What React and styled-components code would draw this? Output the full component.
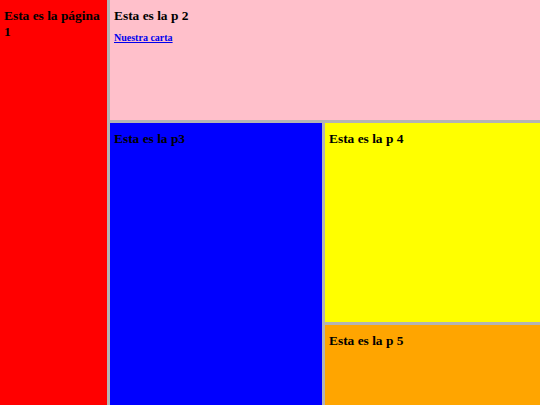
import React from 'react';
import styled, { createGlobalStyle } from 'styled-components';

const Global = createGlobalStyle`
  html, body {
    margin: 0;
    padding: 0;
    height: 100%;
  }
  body {
    font-family: "Liberation Serif", "Times New Roman", serif;
    background: #b8b8b8;
  }
  #root {
    height: 100%;
  }
`;

const Frameset = styled.div`
  display: grid;
  grid-template-columns: ${p => p.cols || 'none'};
  grid-template-rows: ${p => p.rows || 'none'};
  gap: 3px;
  height: ${p => (p.root ? '405px' : '100%')};
  width: 100%;
  min-height: 0;
  background: #b4b4b4;
  overflow: hidden;
`;

const Frame = styled.div`
  background: ${p => p.bg};
  padding: 0 4px;
  overflow: hidden;
  min-height: 0;
`;

const Title = styled.h3`
  margin: 8px 0 0;
  font-size: 13.4px;
  line-height: 16px;
  font-weight: bold;
  color: #000;
`;

const Sub = styled.h5`
  margin: 8px 0 0;
  font-size: 10px;
  font-weight: bold;
`;

const MenuLink = styled.a`
  color: #0000ee;
  text-decoration: underline;
`;

export default function App() {
  return (
    <>
      <Global />
      <Frameset root cols="107px 1fr">
        <Frame bg="#ff0000">
          <Title>Esta es la página 1</Title>
        </Frame>
        <Frameset rows="120px 1fr">
          <Frame bg="#ffc0cb">
            <Title>Esta es la p 2</Title>
            <Sub>
              <MenuLink href="#">Nuestra carta</MenuLink>
            </Sub>
          </Frame>
          <Frameset cols="212px 1fr">
            <Frame bg="#0000ff">
              <Title>Esta es la p3</Title>
            </Frame>
            <Frameset rows="199px 1fr">
              <Frame bg="#ffff00">
                <Title>Esta es la p 4</Title>
              </Frame>
              <Frame bg="#ffa500">
                <Title>Esta es la p 5</Title>
              </Frame>
            </Frameset>
          </Frameset>
        </Frameset>
      </Frameset>
    </>
  );
}
